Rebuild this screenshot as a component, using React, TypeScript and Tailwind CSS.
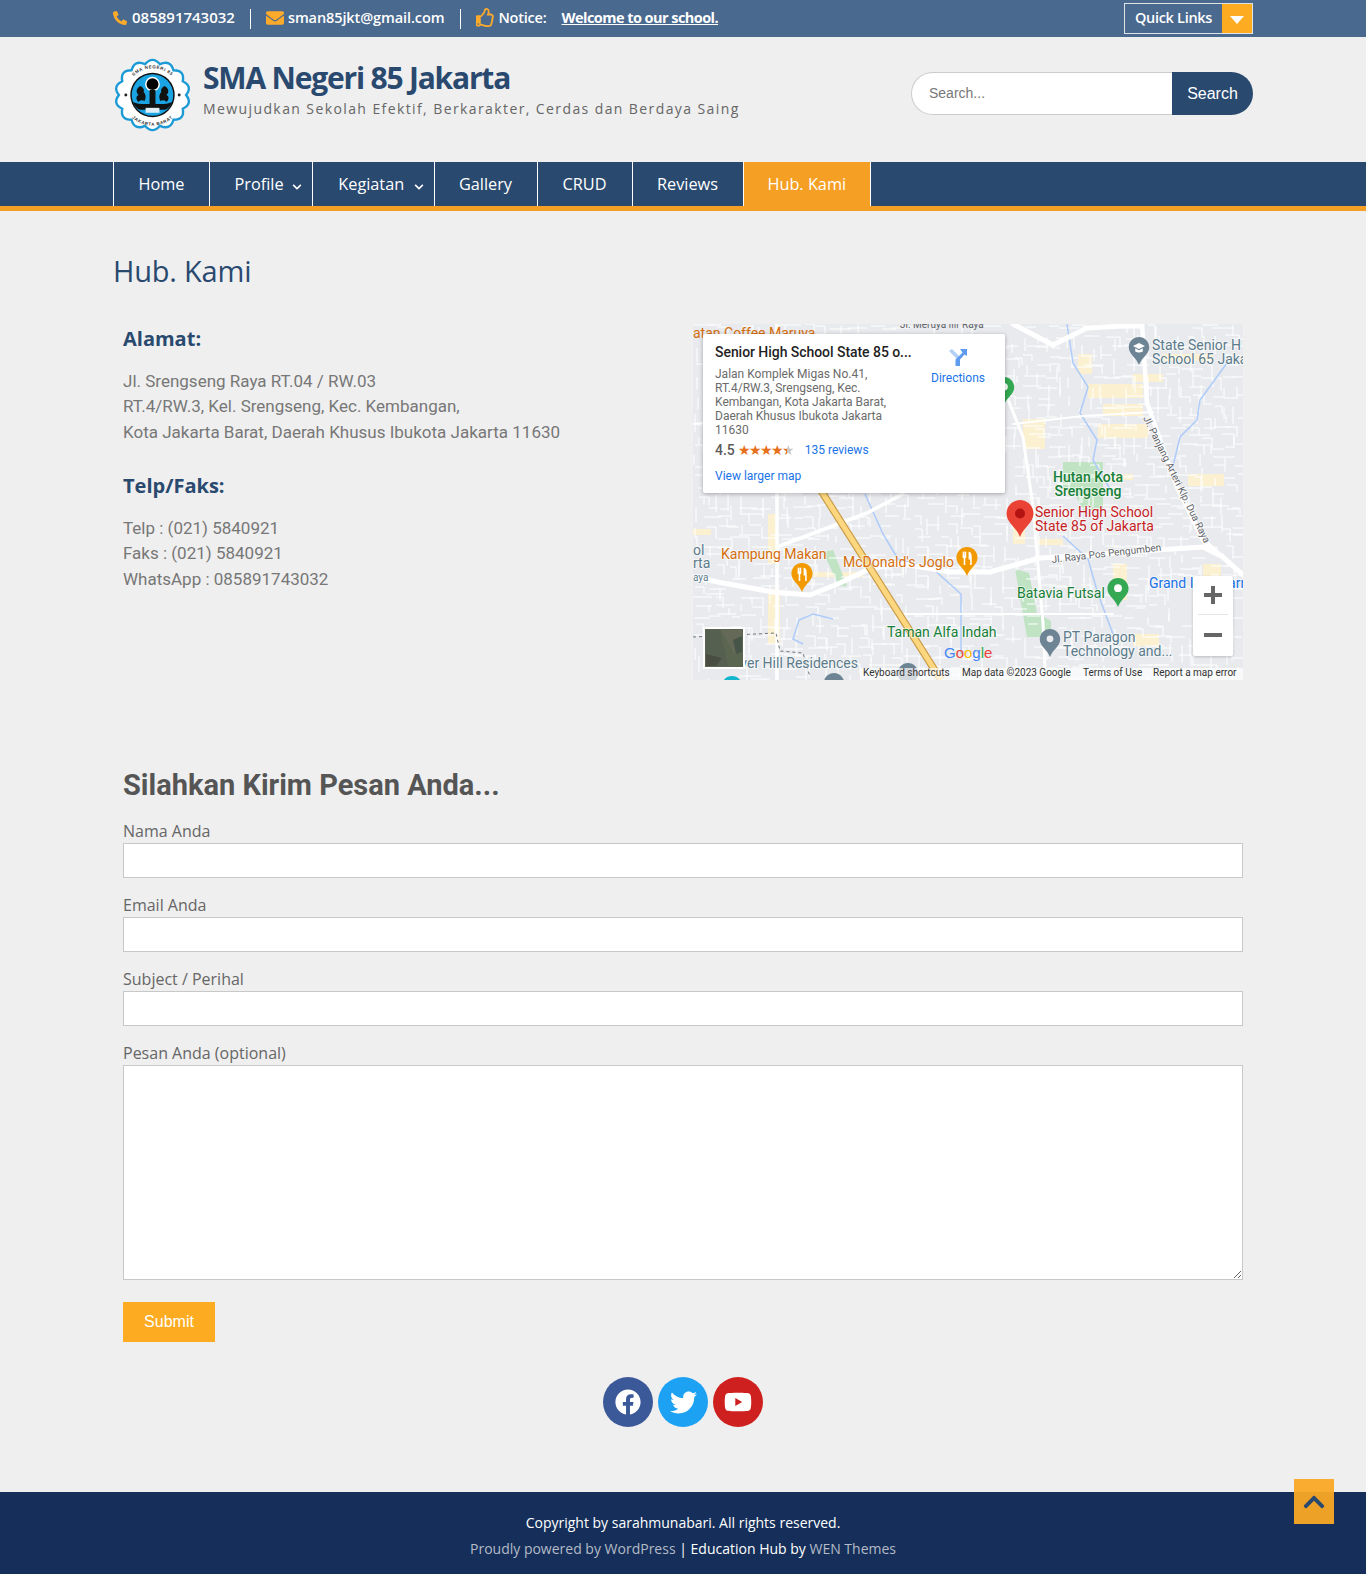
import React from 'react';
import { FaPhoneAlt, FaEnvelope, FaRegThumbsUp, FaFacebook, FaTwitter, FaYoutube, FaChevronUp, FaChevronDown } from 'react-icons/fa';

const navItems = [
  { name: 'Home', w: 'w-[96px]' },
  { name: 'Profile', w: 'w-[103px]', sub: true },
  { name: 'Kegiatan', w: 'w-[121.500px]', sub: true },
  { name: 'Gallery', w: 'w-[103px]' },
  { name: 'CRUD', w: 'w-[95px]' },
  { name: 'Reviews', w: 'w-[111px]' },
  { name: 'Hub. Kami', w: 'w-[128.500px]', active: true },
];

// small streets for the map, same result on every render
function makeStreets() {
  let seed = 85;
  const rnd = () => {
    seed = (seed * 16807) % 2147483647;
    return seed / 2147483647;
  };
  let d = '';
  for (let x = 0; x < 550; x += 11) {
    for (let y = 0; y < 356; y += 10) {
      const px = Math.round(x + rnd() * 6);
      const py = Math.round(y + rnd() * 5);
      const r = rnd();
      if (r < 0.36) d += `M${px} ${py}h${Math.round(8 + rnd() * 14)}`;
      else if (r < 0.62) d += `M${px} ${py}v${Math.round(7 + rnd() * 12)}`;
      else if (r < 0.78) d += `M${px} ${py}h${Math.round(6 + rnd() * 8)}v${Math.round(6 + rnd() * 8)}`;
    }
  }
  return d;
}
const streets = makeStreets();

const patches = [
  [395, 60, 55, 14], [410, 80, 40, 12], [405, 100, 50, 14], [330, 95, 22, 30], [440, 50, 30, 8], [0, 205, 18, 6], [75, 190, 10, 50],
  [495, 150, 36, 12], [510, 240, 18, 60], [410, 150, 30, 6], [75, 265, 12, 55], [120, 248, 50, 5], [420, 240, 14, 36],
  [270, 240, 12, 10], [440, 310, 26, 12], [345, 215, 25, 6], [320, 200, 12, 20], [470, 30, 50, 7], [385, 30, 14, 20],
];

function Pin({ x, top, h, fill, children }: { x: number; top: number; h: number; fill: string; children?: React.ReactNode }) {
  const s = h / 37;
  return (
    <g transform={`translate(${x} ${top}) scale(${s})`}>
      <path d="M0 0C-7.4 0-13.5 6-13.5 13.5C-13.5 23-3.5 27 0 37C3.5 27 13.5 23 13.5 13.5C13.5 6 7.4 0 0 0Z" fill={fill} />
      {children}
    </g>
  );
}

const Fork = () => (
  <g fill="#fff">
    <rect x="-5.5" y="6" width="2.2" height="6" />
    <rect x="-3" y="6" width="2" height="6" />
    <path d="M-5.5 11h4.5v3h-1.2v9h-2v-9h-1.3z" />
    <path d="M2 6c3 0 4 3 4 7v10H4v-7H2z" />
  </g>
);

const Label = ({ x, y, fill, size = 14, weight = 400, anchor, children }: { x: number; y: number; fill: string; size?: number; weight?: number; anchor?: 'end' | 'middle'; children: React.ReactNode }) => (
  <text x={x} y={y} fill={fill} fontSize={size} fontWeight={weight} textAnchor={anchor} stroke="#fff" strokeWidth="2" strokeOpacity="0.55" paintOrder="stroke">
    {children}
  </text>
);

function MapDrawing() {
  return (
    <svg viewBox="0 0 550 356" className="absolute inset-0 w-full h-full font-['Roboto',sans-serif]">
      <rect width="550" height="356" fill="#e8eaed" />
      {patches.map(([x, y, w, h], i) => (
        <rect key={i} x={x} y={y} width={w} height={h} fill="#fbf0cf" />
      ))}
      <path d="M370 138h40v48h-20l-8-16-12-6zM322 245l14 4 8 40 14 8v16h-24zM130 228l10-2 14 36h-8z" fill="#bfe3c3" />
      <path d={streets} stroke="#fff" strokeWidth="1" fill="none" />
      <g stroke="#aecbfa" strokeWidth="1.500" fill="none">
        <path d="M374 0L380 39L395 63L387 89L404 116L400 136L420 170" />
        <path d="M534 39L507 76L504 96L487 113L479 146" />
        <path d="M172 170L190 210L205 235L240 245L268 270L268 330" />
        <path d="M140 295L120 290L106 296L100 315L110 320" />
        <path d="M370 212L395 235L405 270L420 310" />
      </g>
      <g stroke="#fff" fill="none" strokeLinejoin="round" strokeLinecap="round">
        <path d="M0 253L30 259L80 268L117 271L147 259L174 246L204 239L257 248L297 248L347 234L397 231L464 226L510 223L530 233L550 251" strokeWidth="5" />
        <path d="M84 223L174 189L210 170" strokeWidth="3.500" />
        <path d="M84 0V356" strokeWidth="3.500" />
        <path d="M314 73L330 113L340 183L350 299L352 343" strokeWidth="3" />
        <path d="M320 0L360 21L394 4L449 1" strokeWidth="5" />
        <path d="M449 0L454 79L484 163L510 216L550 251" strokeWidth="4.500" />
        <path d="M0 100L84 92L130 60" strokeWidth="2" />
        <path d="M210 290H420" strokeWidth="2" />
        <path d="M320 100L390 92L460 88" strokeWidth="2" />
      </g>
      <path d="M127 165L248 356" stroke="#c79a45" strokeWidth="7.500" fill="none" />
      <path d="M127 165L248 356" stroke="#fdd77f" strokeWidth="5.200" fill="none" />
      <path d="M0 313L83 309L87 327L110 329L117 353" stroke="#70757a" strokeWidth="1" strokeDasharray="3 3" fill="none" />

      <text x="0" y="14" fill="#d56e0c" fontSize="14">atan Coffee Maruya</text>
      <text x="207" y="4" fill="#5f6368" fontSize="10">Jl. Meruya Ilir Raya</text>

      <Pin x={446} top={13} h={28} fill="#6c8494">
        <path d="M-8 12L0 8L8 12L0 16Z" fill="#fff" />
        <path d="M-5 15v4c3 2 7 2 10 0v-4l-5 2.500z" fill="#fff" />
      </Pin>
      <Label x={459} y={26} fill="#5b7b8c">State Senior H</Label>
      <Label x={459} y={40} fill="#5b7b8c">School 65 Jaka</Label>
      <Pin x={311} top={53} h={28} fill="#34a853"><circle cy="13" r="5" fill="#fff" /></Pin>

      <Label x={395} y={158} fill="#188038" weight={500} anchor="middle">Hutan Kota</Label>
      <Label x={395} y={172} fill="#188038" weight={500} anchor="middle">Srengseng</Label>
      <text transform="translate(450 94) rotate(64)" fill="#5f6368" fontSize="10" stroke="#fff" strokeWidth="2" strokeOpacity="0.6" paintOrder="stroke">Jl. Panjang Arteri Klp. Dua Raya</text>
      <text transform="translate(359 239) rotate(-6.500)" fill="#5f6368" fontSize="10" stroke="#fff" strokeWidth="2" strokeOpacity="0.6" paintOrder="stroke">Jl. Raya Pos Pengumben</text>

      <Pin x={327} top={176} h={37} fill="#ea4335"><circle cy="13.500" r="5" fill="#b31412" /></Pin>
      <Label x={342} y={193} fill="#c5221f">Senior High School</Label>
      <Label x={342} y={207} fill="#c5221f">State 85 of Jakarta</Label>

      <Label x={456} y={264} fill="#1a73e8">Grand Indo Farm</Label>
      <Label x={324} y={274} fill="#188038">Batavia Futsal</Label>
      <Pin x={425} top={254} h={29} fill="#34a853"><circle cy="13" r="5" fill="#fff" /></Pin>

      <Pin x={357} top={305} h={28} fill="#6c8494"><circle cy="13" r="4.500" fill="#e8eaed" /></Pin>
      <Label x={370} y={318} fill="#5b7b8c">PT Paragon</Label>
      <Label x={370} y={332} fill="#5b7b8c">Technology and...</Label>

      <Label x={194} y={313} fill="#188038">Taman Alfa Indah</Label>
      <Label x={28} y={235} fill="#d56e0c">Kampung Makan</Label>
      <Pin x={109} top={239} h={29} fill="#f29900"><Fork /></Pin>
      <Label x={150} y={243} fill="#d56e0c">McDonald's Joglo</Label>
      <Pin x={274} top={223} h={29} fill="#f29900"><Fork /></Pin>

      <Label x={0} y={231} fill="#5b7b8c">ol</Label>
      <Label x={0} y={244} fill="#5b7b8c">rta</Label>
      <Label x={0} y={257} fill="#5b7b8c" size={10}>aya</Label>
      <Label x={165} y={344} fill="#5b7b8c" anchor="end">Silver Hill Residences</Label>

      <Pin x={39} top={352} h={28} fill="#12b5cb" />
      <Pin x={141} top={349} h={28} fill="#6c8494" />
      <Pin x={215} top={339} h={28} fill="#6c8494" />

      <rect x="167" y="344" width="383" height="12" fill="#fff" fillOpacity="0.7" />
      <g fill="#333" fontSize="10">
        <text x="170" y="352">Keyboard shortcuts</text>
        <text x="269" y="352">Map data ©2023 Google</text>
        <text x="390" y="352">Terms of Use</text>
        <text x="460" y="352">Report a map error</text>
      </g>
      <text x="251" y="334" fontSize="15" fontWeight="500" fontFamily="'Liberation Sans',sans-serif">
        <tspan fill="#4285f4">G</tspan><tspan fill="#ea4335">o</tspan><tspan fill="#fbbc05">o</tspan><tspan fill="#4285f4">g</tspan><tspan fill="#34a853">l</tspan><tspan fill="#ea4335">e</tspan>
      </text>

      {/* satellite thumbnail */}
      <rect x="11" y="304" width="40" height="40" fill="#5a6650" stroke="#fff" strokeWidth="2" />
      <path d="M13 306h14l8 36H13z" fill="#566050" />
      <path d="M28 306h21v20l-8 4z" fill="#656a58" />
      <path d="M40 316l9-4v16l-6 2z" fill="#465548" />
      <path d="M13 330l16 4-6 8H13z" fill="#4a4d42" />
    </svg>
  );
}

function MapInfoCard() {
  return (
    <div className="absolute left-[10px] top-[10px] w-[302px] h-[159px] bg-white rounded-[2px] shadow-[0_1px_4px_rgba(0,0,0,0.3)] px-[12px] pt-[10px] font-['Roboto',sans-serif] flex">
      <div className="w-[205px]">
        <div className="text-[14px] leading-[16px] font-medium text-[#1f1f1f] whitespace-nowrap tracking-[-0.05px]">Senior High School State 85 o...</div>
        <div className="mt-[7px] text-[12px] leading-[14px] text-[#6b6b6b]">
          Jalan Komplek Migas No.41,<br />RT.4/RW.3, Srengseng, Kec.<br />Kembangan, Kota Jakarta Barat,<br />Daerah Khusus Ibukota Jakarta<br />11630
        </div>
        <div className="mt-[5px] flex items-center h-[16px] whitespace-nowrap">
          <span className="text-[14px] font-medium text-[#5b5b5b]">4.5</span>
          <span className="ml-[3px] text-[13.500px] tracking-[-2px] text-[#e7711b]">
            ★★★★<span className="bg-[linear-gradient(90deg,#e7711b_50%,#c8c8c8_50%)] bg-clip-text text-transparent">★</span>
          </span>
          <span className="ml-[12px] text-[12px] text-[#1a73e8]">135 reviews</span>
        </div>
        <div className="mt-[11px] text-[12px] leading-[14px] text-[#1a73e8]">View larger map</div>
      </div>
      <div className="flex-1 flex flex-col items-center pl-[3px] mt-[4px]">
        <svg viewBox="0 0 18 18" className="w-[18px] h-[18px]">
          <path d="M0 3L3 1L11 9L9 12Z" fill="#b3cff7" />
          <path d="M6.500 18V11.500L13.500 4.500L11 1H18V8L15.500 6.500L11 11.500V18Z" fill="#5f9bee" />
        </svg>
        <div className="text-[12px] leading-[14px] text-[#1a73e8] mt-[5px]">Directions</div>
      </div>
    </div>
  );
}

function ZoomControl() {
  return (
    <div className="absolute left-[500px] top-[252px] w-[40px] h-[80px] bg-white rounded-[2px] shadow-[0_1px_3px_rgba(0,0,0,0.2)] flex flex-col items-center">
      <div className="h-[38px] flex items-center justify-center">
        <svg viewBox="0 0 18 18" className="w-[18px] h-[18px]"><path d="M0 7h7V0h4v7h7v4h-7v7H7v-7H0z" fill="#666" /></svg>
      </div>
      <div className="w-[30px] h-px bg-[#e6e6e6]" />
      <div className="h-[40px] flex items-center justify-center">
        <svg viewBox="0 0 18 18" className="w-[18px] h-[18px]"><path d="M0 7h18v4H0z" fill="#666" /></svg>
      </div>
    </div>
  );
}

function SchoolLogo() {
  const scallops: string[] = [];
  const n = 14;
  for (let i = 0; i < n; i++) {
    const a = (i / n) * Math.PI * 2;
    const b = ((i + 1) / n) * Math.PI * 2;
    const m = (a + b) / 2;
    const start = `${40 + 34 * Math.cos(a)} ${37 + 32 * Math.sin(a)}`;
    const ctrl = `${40 + 42 * Math.cos(m)} ${37 + 40 * Math.sin(m)}`;
    const end = `${40 + 34 * Math.cos(b)} ${37 + 32 * Math.sin(b)}`;
    scallops.push(`${i === 0 ? 'M' + start : ''}Q${ctrl} ${end}`);
  }
  return (
    <svg viewBox="0 0 80 74" className="w-[79px] h-[74px] shrink-0 mb-[10px]">
      <path d={scallops.join('') + 'Z'} fill="#fff" stroke="#1b9ad6" strokeWidth="2.400" />
      <defs>
        <path id="logoTop" d="M13 37a27 27 0 0 1 54 0" />
        <path id="logoBottom" d="M9 37a31 31 0 0 0 62 0" />
      </defs>
      <text fontSize="4.500" fontWeight="700" letterSpacing="0.6" fill="#333" fontFamily="'Liberation Sans',sans-serif">
        <textPath href="#logoTop" startOffset="50%" textAnchor="middle">SMA NEGERI 85</textPath>
      </text>
      <text fontSize="4.500" fontWeight="700" letterSpacing="0.6" fill="#333" fontFamily="'Liberation Sans',sans-serif">
        <textPath href="#logoBottom" startOffset="50%" textAnchor="middle">JAKARTA BARAT</textPath>
      </text>
      <circle cx="40" cy="37" r="22.500" fill="#111" />
      <circle cx="40" cy="37" r="21" fill="#1ba4e4" />
      <circle cx="40" cy="26" r="7.500" fill="#fff" />
      <circle cx="40" cy="26" r="6" fill="#000" />
      <path d="M37 32h6v14h-6zM20 44c6 3 14 2 20 2s14 1 20-2c-2 5-6 8-8 8H28c-2 0-6-3-8-8z" fill="#111" />
      <path d="M28 28c-5 2-5 7-2 9-3 1-3 5 0 7 1-2 4-2 6-1 2-4 1-7-1-9 1-2 0-4-3-6zM52 28c5 2 5 7 2 9 3 1 3 5 0 7-1-2-4-2-6-1-2-4-1-7 1-9-1-2 0-4 3-6z" fill="#111" />
      <rect x="33" y="50" width="14" height="5" fill="#dfeef7" />
      <circle cx="13" cy="37" r="1.500" fill="#222" />
      <circle cx="67" cy="37" r="1.500" fill="#222" />
    </svg>
  );
}

const inputClass = 'block w-full bg-white border border-[#c8c8c8] outline-none';

const Field = ({ label, top }: { label: string; top: string }) => (
  <div className={top}>
    <label className="block text-[16px] leading-[24px] text-[#666]">{label}</label>
    <input type="text" className={`${inputClass} h-[35px]`} />
  </div>
);

const App: React.FC = () => {
  return (
    <div className="min-h-[1574px] bg-[#efefef] font-['Open_Sans',sans-serif] overflow-hidden">
      {/* top bar */}
      <div className="h-[37px] bg-[#4a698f] text-white">
        <div className="w-[1140px] mx-auto h-full flex items-center">
          <FaPhoneAlt className="w-[14px] h-[14px] text-[#fbaa2b] mb-[2px]" />
          <span className="ml-[5px] mb-[2px] text-[15px] font-semibold">085891743032</span>
          <span className="ml-[15px] w-px h-[20px] bg-white" />
          <FaEnvelope className="ml-[15px] w-[18px] h-[18px] text-[#fbaa2b] mb-[2px]" />
          <span className="ml-[4px] mb-[2px] text-[14.500px] font-semibold tracking-[-0.1px]">sman85jkt@gmail.com</span>
          <span className="ml-[16px] w-px h-[20px] bg-white" />
          <FaRegThumbsUp className="ml-[15px] w-[19px] h-[19px] text-[#fbaa2b] mb-[2px]" />
          <span className="ml-[3px] mb-[2px] text-[14.500px] font-semibold tracking-[-0.2px]">Notice:</span>
          <span className="ml-[15px] mb-[2px] text-[14.500px] font-bold underline tracking-[-0.550px]">Welcome to our school.</span>
          <div className="ml-auto flex h-[31px] w-[129px] border border-[#dfe3e8] mb-[1px]">
            <span className="flex-1 flex items-center justify-center text-[14.500px] font-semibold tracking-[-0.3px]">Quick Links</span>
            <span className="w-[30px] bg-[#fdab20] flex items-center justify-center">
              <span className="mt-[4px] border-x-[7px] border-x-transparent border-t-[8px] border-t-white" />
            </span>
          </div>
        </div>
      </div>

      {/* site header */}
      <div className="h-[125px]">
        <div className="w-[1140px] mx-auto h-full flex items-center">
          <SchoolLogo />
          <div className="ml-[11px] mb-[21px]">
            <div className="text-[30px] leading-[38px] font-bold text-[#29496f] tracking-[-1.200px]">SMA Negeri 85 Jakarta</div>
            <div className="text-[14px] leading-[20px] text-[#666] tracking-[1.400px] mt-[2px]">Mewujudkan Sekolah Efektif, Berkarakter, Cerdas dan Berdaya Saing</div>
          </div>
          <div className="ml-auto flex h-[43px] w-[342px] mb-[12px] font-['Liberation_Sans',sans-serif]">
            <input placeholder="Search..." className="w-[261px] bg-white border border-[#ccc] border-r-0 rounded-l-[30px] pl-[17px] text-[14px] outline-none placeholder:text-[#777]" />
            <button className="flex-1 bg-[#29496f] text-white text-[16px] rounded-r-[30px]">Search</button>
          </div>
        </div>
      </div>

      {/* nav */}
      <div className="h-[49px] bg-[#29496f] border-b-[5px] border-[#f5a024]">
        <div className="w-[1140px] mx-auto flex h-[44px]">
          {navItems.map((item) => (
            <div
              key={item.name}
              className={`${item.w} flex items-center justify-center border-l border-white text-[16.300px] text-white ${item.active ? 'bg-[#f5a024] border-r' : ''} ${item.sub ? 'relative pr-[4px]' : ''}`}
            >
              {item.name}
              {item.sub && <FaChevronDown className="absolute right-[10px] top-[20px] w-[10px] h-[10px]" />}
            </div>
          ))}
        </div>
      </div>

      {/* content */}
      <div className="w-[1140px] mx-auto pt-[42px]">
        <h1 className="text-[29px] leading-[36px] text-[#29496f] font-medium tracking-[-0.2px]">Hub. Kami</h1>
        <div className="px-[10px]">
          <div className="mt-[35px] flex justify-between">
            <div className="font-['Roboto',sans-serif] text-[17px] leading-[25.500px] text-[#777]">
              <h3 className="font-['Open_Sans',sans-serif] text-[20px] leading-[30px] font-bold text-[#29496f]">Alamat:</h3>
              <p className="mt-[14.500px]">Jl. Srengseng Raya RT.04 / RW.03<br />RT.4/RW.3, Kel. Srengseng, Kec. Kembangan,<br />Kota Jakarta Barat, Daerah Khusus Ibukota Jakarta 11630</p>
              <h3 className="mt-[26px] font-['Open_Sans',sans-serif] text-[20px] leading-[30px] font-bold text-[#29496f]">Telp/Faks:</h3>
              <p className="mt-[14.500px]">Telp : (021) 5840921<br />Faks : (021) 5840921<br />WhatsApp : 085891743032</p>
            </div>
            <div className="relative w-[550px] h-[356px] overflow-hidden">
              <MapDrawing />
              <MapInfoCard />
              <ZoomControl />
            </div>
          </div>

          <h2 className="mt-[85px] font-['Roboto',sans-serif] text-[29px] leading-[40px] font-bold text-[#555]">Silahkan Kirim Pesan Anda...</h2>
          <Field label="Nama Anda" top="mt-[14px]" />
          <Field label="Email Anda" top="mt-[15px]" />
          <Field label="Subject / Perihal" top="mt-[15px]" />
          <div className="mt-[15px]">
            <label className="block text-[16px] leading-[24px] text-[#666]">Pesan Anda (optional)</label>
            <textarea className={`${inputClass} h-[215px]`} />
          </div>
          <button className="mt-[22px] block w-[92px] h-[40px] bg-[#fdab20] text-white text-[16px] font-['Liberation_Sans',sans-serif]">Submit</button>

          <div className="mt-[35px] flex justify-center gap-[5px]">
            <span className="w-[50px] h-[50px] rounded-full bg-[#3b5998] flex items-center justify-center text-white"><FaFacebook className="w-[26px] h-[26px]" /></span>
            <span className="w-[50px] h-[50px] rounded-full bg-[#1da1f2] flex items-center justify-center text-white"><FaTwitter className="w-[27px] h-[27px]" /></span>
            <span className="w-[50px] h-[50px] rounded-full bg-[#cd201f] flex items-center justify-center text-white"><FaYoutube className="w-[28px] h-[28px]" /></span>
          </div>
        </div>
      </div>

      {/* footer */}
      <div className="mt-[65px] h-[83px] bg-[#152f5a] pt-[18px] text-center text-[14px] leading-[26px] text-white">
        <div>Copyright by sarahmunabari. All rights reserved.</div>
        <div><span className="text-[#b4bac6]">Proudly powered by WordPress</span> | Education Hub by <span className="text-[#b4bac6]">WEN Themes</span></div>
      </div>

      {/* back to top */}
      <div className="fixed right-[32px] bottom-[50px] w-[40px] h-[45px] bg-[#f9a825]/95 flex items-center justify-center text-[#29496f]">
        <FaChevronUp className="w-[24px] h-[24px]" />
      </div>
    </div>
  );
};

export default App;
